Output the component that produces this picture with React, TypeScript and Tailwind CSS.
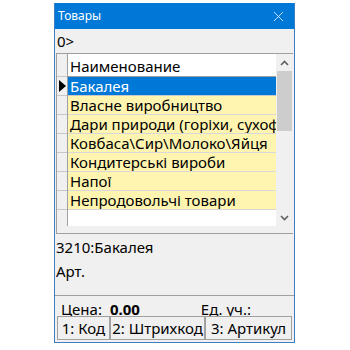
import { X } from "lucide-react";

const rows = [
  "Власне виробництво",
  "Дари природи (горіхи, сухофрукти)",
  "Ковбаса\\Сир\\Молоко\\Яйця",
  "Кондитерські вироби",
  "Напої",
  "Непродовольчі товари",
];

function App() {
  return (
    <div
      className="w-[350px] h-[350px] bg-white pt-[3px] pl-[54px] overflow-hidden"
      style={{ fontFamily: '"Noto Sans", "DejaVu Sans", sans-serif' }}
    >
      <div className="w-[241px] h-[340px] flex flex-col border-x border-b border-[#3a7fc4] bg-[#f0f0f0]">
        {/* Title bar */}
        <div className="h-[26px] shrink-0 bg-[#0078d7] flex items-center justify-between pl-[3px] pr-[7px]">
          <span className="text-white text-[12px]">Товары</span>
          <X className="w-[17px] h-[17px] text-[#cfe6fb]" strokeWidth={1.3} />
        </div>

        {/* Search row */}
        <div className="h-[24px] shrink-0 flex items-center pl-[2px] text-[15px] text-black">0&gt;</div>

        {/* Grid */}
        <div className="h-[181px] shrink-0 mx-[1px] border-t border-l border-[#a0a0a0] flex flex-col bg-white">
          <div className="flex h-[172px]">
            <div className="w-[11px] shrink-0 flex flex-col bg-[#f0f0f0] border-r border-[#a0a0a0]">
              <div className="h-[23px] border-b border-[#c8c8c8]"></div>
              <div className="h-[19px] border-b border-[#c8c8c8] flex items-center justify-center">
                <div className="w-0 h-0 border-y-[6px] border-y-transparent border-l-[7px] border-l-black"></div>
              </div>
              {rows.map((r) => (
                <div key={r} className="h-[19px] border-b border-[#c8c8c8]"></div>
              ))}
            </div>
            <div className="flex-1 min-w-0 flex flex-col text-[15px] leading-none">
              <div className="h-[23px] flex items-end pb-[2px] pl-[2px] bg-white border-b border-[#a0a0a0] whitespace-nowrap">
                Наименование
              </div>
              <div className="h-[19px] flex items-end pb-[1px] pl-[2px] bg-[#0078d7] text-white border-b border-[#c8c8c8] whitespace-nowrap">
                Бакалея
              </div>
              {rows.map((r) => (
                <div
                  key={r}
                  className="h-[19px] flex items-end pb-[1px] pl-[2px] bg-[#fff5b0] border-b border-[#d8d8d8] whitespace-nowrap overflow-hidden"
                >
                  {r}
                </div>
              ))}
            </div>
            <div className="w-[17px] shrink-0 bg-[#f0f0f0] flex flex-col items-center">
              <div className="h-[17px] flex items-center justify-center">
                <svg width="9" height="6" viewBox="0 0 9 6">
                  <path d="M1 5 L4.5 1.5 L8 5" fill="none" stroke="#606060" strokeWidth="1.6" />
                </svg>
              </div>
              <div className="w-[15px] h-[60px] bg-[#cdcdcd]"></div>
              <div className="flex-1"></div>
              <div className="h-[17px] flex items-center justify-center">
                <svg width="9" height="6" viewBox="0 0 9 6">
                  <path d="M1 1 L4.5 4.5 L8 1" fill="none" stroke="#606060" strokeWidth="1.6" />
                </svg>
              </div>
            </div>
          </div>
          <div className="flex-1 bg-[#f0f0f0] border-b border-[#a0a0a0]"></div>
        </div>

        {/* Info panel */}
        <div className="h-[62px] shrink-0 border-b border-[#a0a0a0] px-[1px] pt-[1px] text-[15px] leading-[24px] text-black">
          <div>3210:Бакалея</div>
          <div>Арт.</div>
        </div>

        {/* Price row */}
        <div className="h-[20px] shrink-0 overflow-hidden flex items-start text-[15px] text-black">
          <div className="flex items-baseline pl-[6px] pt-[6px] leading-none">
            <span>Цена:</span>
            <span className="font-bold ml-[8px]">0.00</span>
          </div>
          <div className="ml-auto pr-[43px] pt-[6px] leading-none">Ед. уч.:</div>
        </div>

        {/* Buttons */}
        <div className="h-[24px] shrink-0 flex text-[15px] text-black px-[2px]">
          <div className="w-[53px] border border-[#a0a0a0] bg-[#f0f0f0] flex items-center justify-center">1: Код</div>
          <div className="w-[95px] border border-[#a0a0a0] bg-[#f0f0f0] flex items-center justify-center">2: Штрихкод</div>
          <div className="flex-1 border border-[#a0a0a0] bg-[#f0f0f0] flex items-center justify-center">3: Артикул</div>
        </div>
      </div>
    </div>
  );
}

export default App;
